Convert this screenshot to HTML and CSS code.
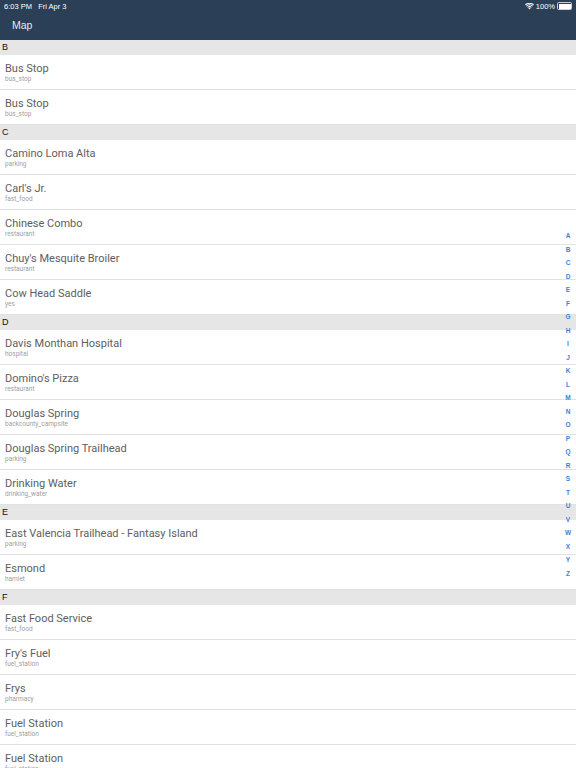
FILE: index.html
```html
<!DOCTYPE html>
<html lang="en">
<head>
  <meta charset="UTF-8" />
  <title>Map</title>
  <link rel="stylesheet" href="styles.css">
</head>
<body>
  <div class="top">
    <div class="status">
      <span>6:03 PM&nbsp;&nbsp;&nbsp;Fri Apr 3</span>
      <span class="status-right">
        <svg width="9" height="7" viewBox="0 0 18 14">
          <path d="M9 13 L6.5 10.2 A3.6 3.6 0 0 1 11.5 10.2 Z" fill="#fff"/>
          <path d="M4.6 8.2 A6.4 6.4 0 0 1 13.4 8.2 L12.2 9.5 A4.6 4.6 0 0 0 5.8 9.5 Z" fill="#fff"/>
          <path d="M2.2 5.6 A10 10 0 0 1 15.8 5.6 L14.6 6.9 A8.2 8.2 0 0 0 3.4 6.9 Z" fill="#fff"/>
          <path d="M0 3.1 A13.2 13.2 0 0 1 18 3.1 L16.8 4.4 A11.4 11.4 0 0 0 1.2 4.4 Z" fill="#fff"/>
        </svg>
        100%
        <span class="battery"><span class="battery-fill"></span></span>
      </span>
    </div>
    <div class="navbar">Map</div>
  </div>

  <div class="list" id="list"></div>

  <div class="index" id="index"></div>

  <script>
    const sections = [
      ["B", [["Bus Stop", "bus_stop"], ["Bus Stop", "bus_stop"]]],
      ["C", [["Camino Loma Alta", "parking"], ["Carl's Jr.", "fast_food"], ["Chinese Combo", "restaurant"],
             ["Chuy's Mesquite Broiler", "restaurant"], ["Cow Head Saddle", "yes"]]],
      ["D", [["Davis Monthan Hospital", "hospital"], ["Domino's Pizza", "restaurant"],
             ["Douglas Spring", "backcounty_campsite"], ["Douglas Spring Trailhead", "parking"],
             ["Drinking Water", "drinking_water"]]],
      ["E", [["East Valencia Trailhead - Fantasy Island", "parking"], ["Esmond", "hamlet"]]],
      ["F", [["Fast Food Service", "fast_food"], ["Fry's Fuel", "fuel_station"], ["Frys", "pharmacy"],
             ["Fuel Station", "fuel_station"], ["Fuel Station", "fuel_station"]]]
    ];

    let html = "";
    sections.forEach(([letter, rows]) => {
      html += `<div class="section">${letter}</div>`;
      rows.forEach(([name, kind]) => {
        html += `<div class="row"><div class="name">${name}</div><div class="kind">${kind}</div></div>`;
      });
    });
    document.getElementById("list").innerHTML = html;

    let letters = "";
    for (let i = 0; i < 26; i++) {
      letters += `<div>${String.fromCharCode(65 + i)}</div>`;
    }
    document.getElementById("index").innerHTML = letters;
  </script>
</body>
</html>
```

FILE: styles.css
```css
html, body {
  margin: 0;
  padding: 0;
  height: 100%;
  overflow: hidden;
  background: #fff;
  font-family: 'Liberation Sans', Arial, sans-serif;
}

.top {
  background: #2b3f56;
  color: #fff;
  height: 40px;
}

.status {
  height: 12px;
  display: flex;
  justify-content: space-between;
  align-items: center;
  padding: 0 4px;
  font-size: 7.5px;
}

.status-right {
  display: flex;
  align-items: center;
  gap: 2px;
}

.battery {
  display: inline-block;
  width: 12px;
  height: 5px;
  border: 1px solid #ccd;
  border-radius: 1.5px;
  padding: 0.5px;
}

.battery-fill {
  display: block;
  width: 100%;
  height: 100%;
  background: #fff;
}

.navbar {
  height: 28px;
  line-height: 27px;
  padding-left: 12px;
  font-size: 10.5px;
  color: #e4e8ee;
}

.section {
  height: 15px;
  line-height: 15px;
  background: #e6e6e6;
  font-size: 9px;
  padding-left: 2px;
  color: #111;
}

.row {
  height: 34px;
  border-bottom: 1px solid #e2e2e2;
  padding-left: 5px;
}

.row .name {
  font-family: Roboto, 'Liberation Sans', sans-serif;
  font-size: 11px;
  color: #5e5e5e;
  padding-top: 7px;
  line-height: 13px;
}

.row .kind {
  font-family: Roboto, 'Liberation Sans', sans-serif;
  font-size: 6.5px;
  color: #a0a0a0;
  line-height: 8px;
}

.index {
  position: absolute;
  right: 4px;
  top: 232px;
  width: 8px;
  text-align: center;
  font-size: 6.5px;
  font-weight: bold;
  color: #3c82d8;
}

.index div {
  height: 13.52px;
  line-height: 8px;
}
```
